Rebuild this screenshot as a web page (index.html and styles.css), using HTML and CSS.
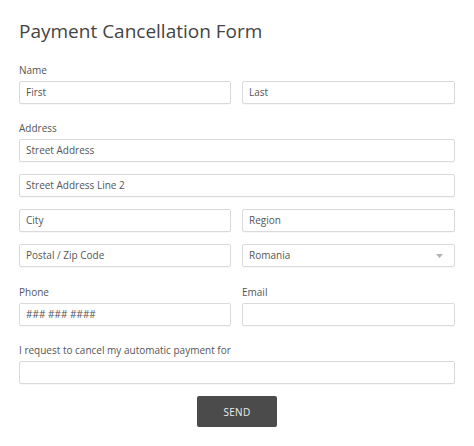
FILE: index.html
```html
<!DOCTYPE html>
<html>
<head>
<meta charset="utf-8">
<link rel="stylesheet" href="styles.css">
</head>
<body>
<form class="form">
  <h1 class="title">Payment Cancellation Form</h1>

  <div class="group group-first">
    <div class="label">Name</div>
    <div class="row two">
      <div class="field">First</div>
      <div class="field">Last</div>
    </div>
  </div>

  <div class="group">
    <div class="label">Address</div>
    <div class="rows">
      <div class="field">Street Address</div>
      <div class="field">Street Address Line 2</div>
      <div class="row two">
        <div class="field">City</div>
        <div class="field">Region</div>
      </div>
      <div class="row two">
        <div class="field">Postal / Zip Code</div>
        <div class="field select"><span>Romania</span><svg class="caret" width="7" height="4" viewBox="0 0 7 4"><path d="M0 0 L7 0 L3.5 4 Z" fill="#b3b3b3"/></svg></div>
      </div>
    </div>
  </div>

  <div class="group group-phone">
    <div class="row two">
      <div class="col">
        <div class="label">Phone</div>
        <div class="field">### ### ####</div>
      </div>
      <div class="col">
        <div class="label">Email</div>
        <div class="field"></div>
      </div>
    </div>
  </div>

  <div class="group">
    <div class="label">I request to cancel my automatic payment for</div>
    <div class="field"></div>
  </div>

  <div class="actions">
    <button type="button" class="send">SEND</button>
  </div>
</form>
</body>
</html>
```

FILE: styles.css
```css
html, body {
  margin: 0;
  padding: 0;
  background: #ffffff;
}
body {
  font-family: "Open Sans", "DejaVu Sans", sans-serif;
  color: #555555;
}
.form {
  padding: 18px 19px 0 19px;
  display: flex;
  flex-direction: column;
}
.title {
  margin: 0;
  font-size: 19px;
  line-height: 27px;
  font-weight: 400;
  color: #444444;
}
.group {
  margin-top: 16px;
  display: flex;
  flex-direction: column;
}
.group-first {
  margin-top: 17px;
}
.group-phone {
  margin-top: 17px;
}
.label {
  font-size: 10px;
  line-height: 17px;
  color: #555555;
  margin-bottom: 2px;
}
.rows {
  display: flex;
  flex-direction: column;
  gap: 12px;
}
.row.two {
  display: grid;
  grid-template-columns: 212px 1fr;
  column-gap: 11px;
}
.col {
  display: flex;
  flex-direction: column;
}
.field {
  box-sizing: border-box;
  height: 23px;
  border: 1px solid #dadada;
  border-radius: 2px;
  padding: 0 6px;
  font-size: 10px;
  line-height: 21px;
  color: #555555;
  background: #ffffff;
  box-shadow: 0 1px 1px rgba(0,0,0,0.03);
}
.select {
  display: flex;
  align-items: center;
  justify-content: space-between;
  padding-right: 11px;
}
.caret {
  display: block;
}
.actions {
  display: flex;
  justify-content: center;
  margin-top: 12px;
}
.send {
  width: 80px;
  height: 31px;
  border: none;
  border-radius: 2px;
  background: #4b4b4b;
  color: #eeeeee;
  font-family: "Open Sans", "DejaVu Sans", sans-serif;
  font-size: 10px;
  letter-spacing: 0.3px;
  padding: 0;
}
```
